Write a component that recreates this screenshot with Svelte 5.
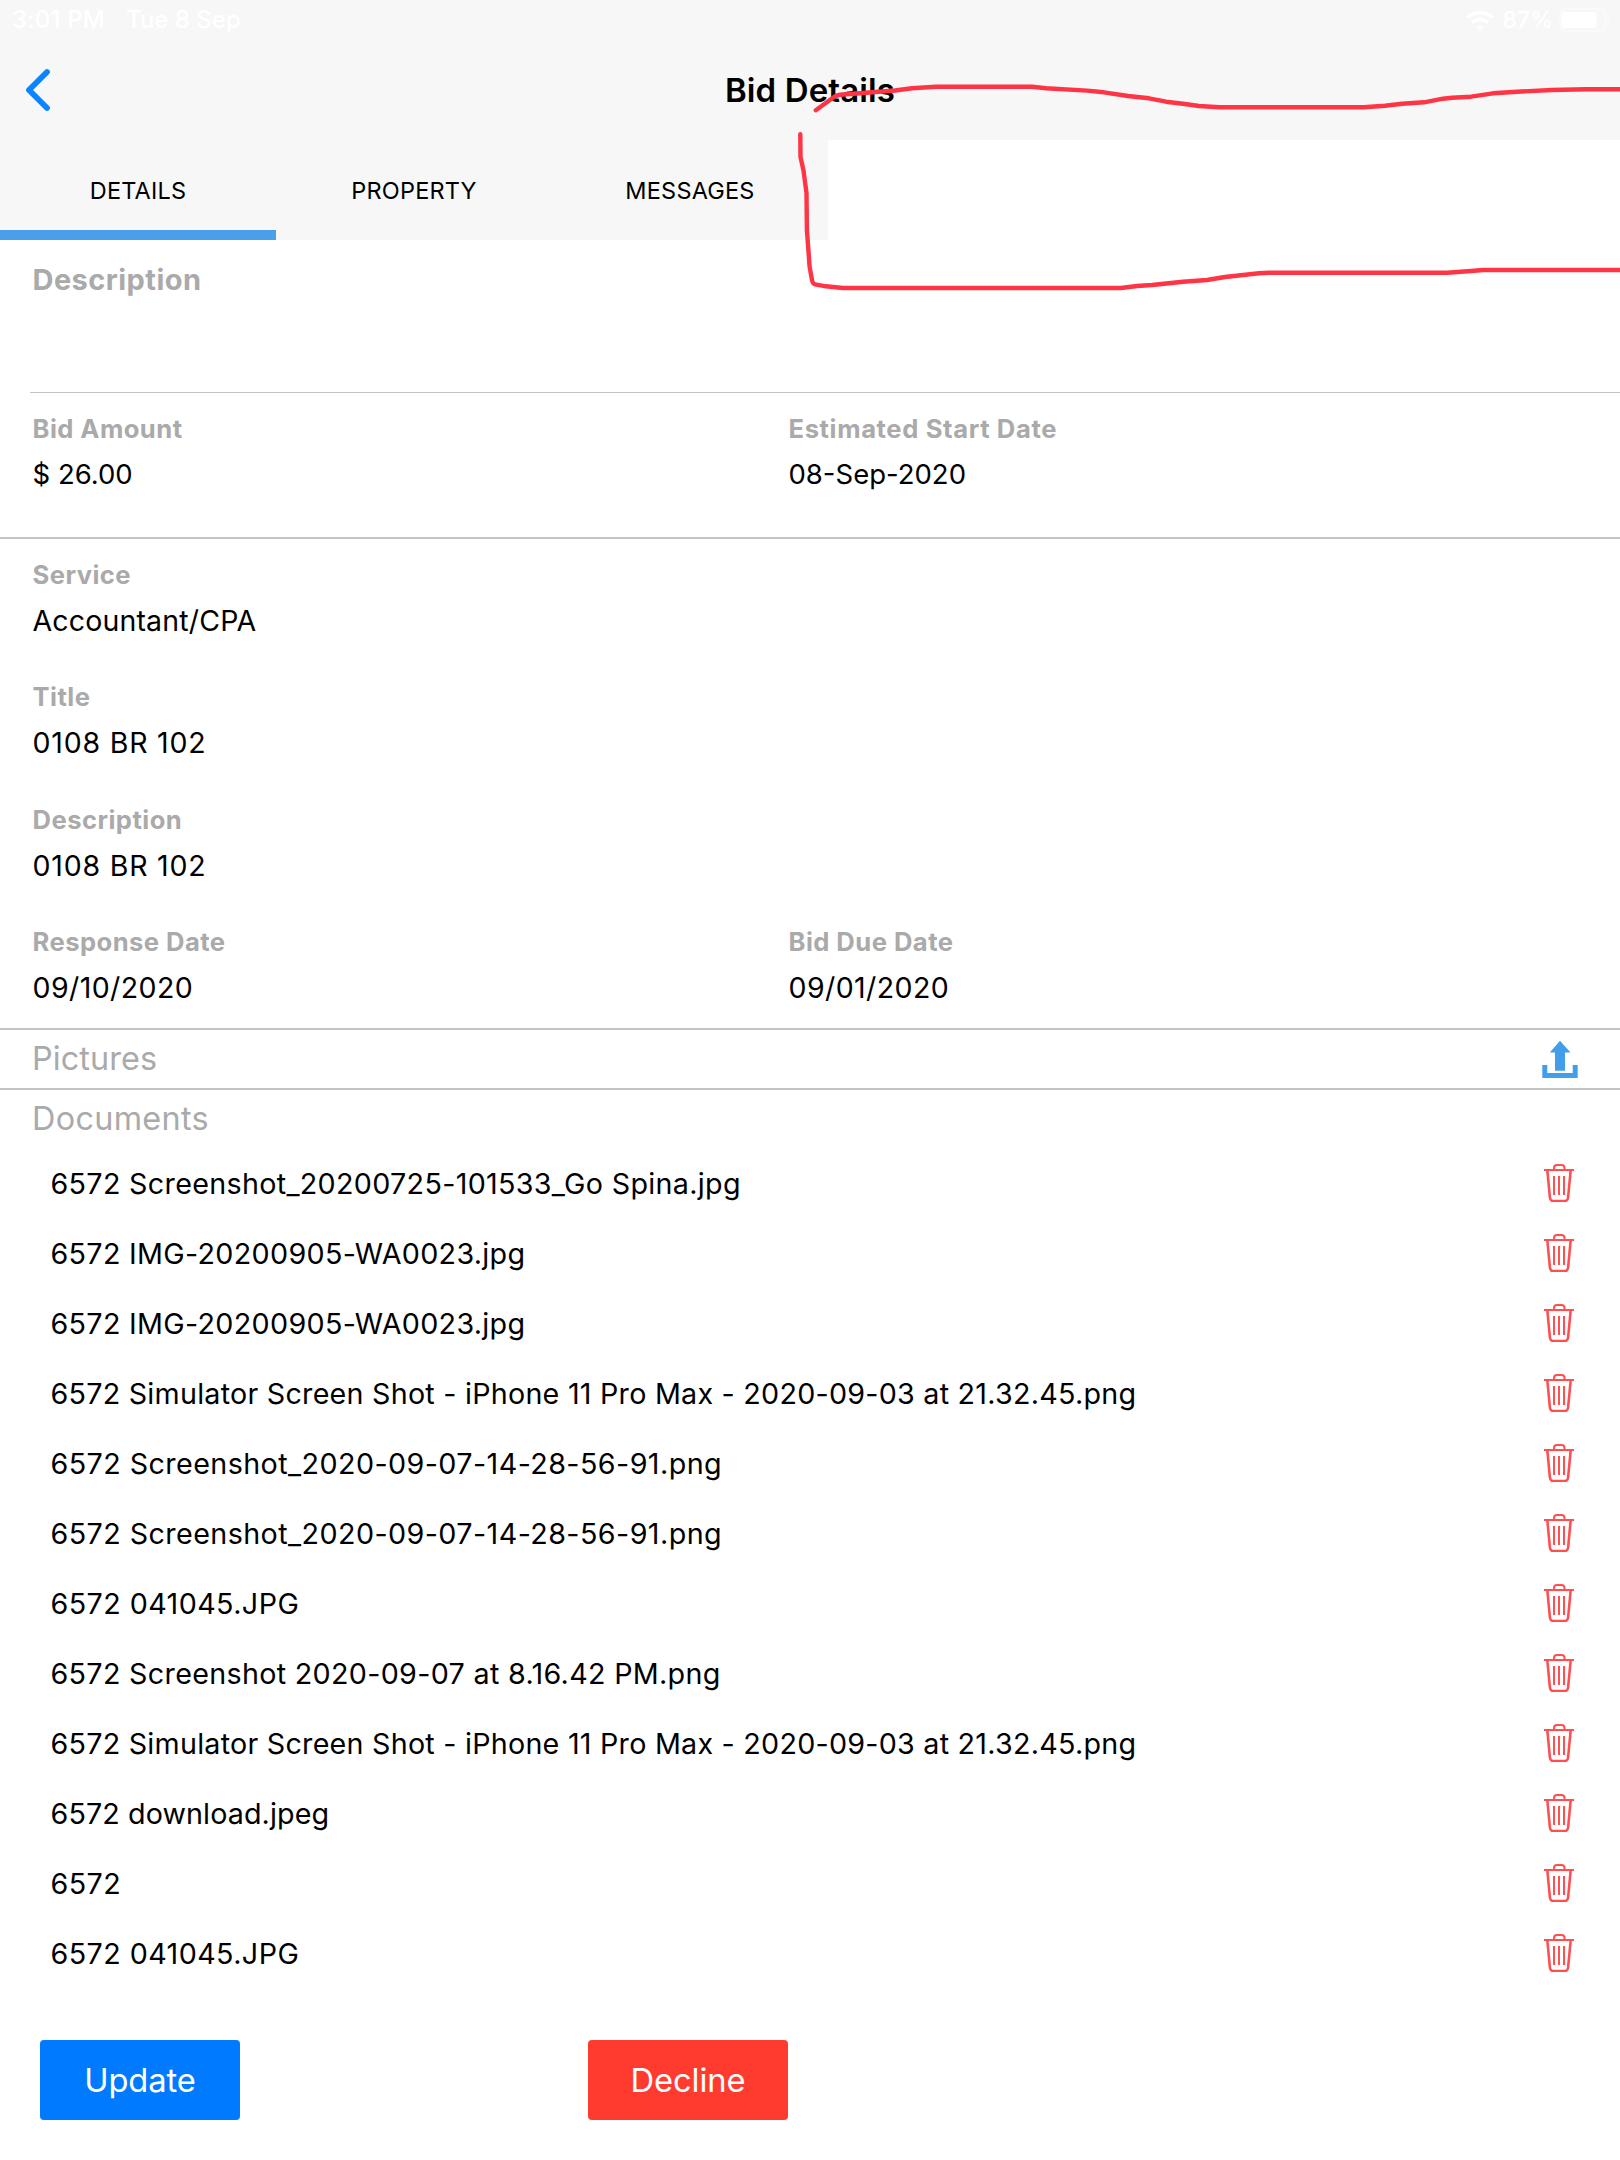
<script>
  const tabs = ['DETAILS', 'PROPERTY', 'MESSAGES'];
  let active = $state('DETAILS');

  const request = [
    [{ label: 'Service', value: 'Accountant/CPA', spacing: 'word' }],
    [{ label: 'Title', value: '0108 BR 102', spacing: 'loose' }],
    [{ label: 'Description', value: '0108 BR 102', spacing: 'loose' }],
    [
      { label: 'Response Date', value: '09/10/2020', spacing: 'date' },
      { label: 'Bid Due Date', value: '09/01/2020', spacing: 'date' },
    ],
  ];

  const documents = [
    { name: '6572 Screenshot_20200725-101533_Go Spina.jpg' },
    { name: '6572 IMG-20200905-WA0023.jpg' },
    { name: '6572 IMG-20200905-WA0023.jpg' },
    { name: '6572 Simulator Screen Shot - iPhone 11 Pro Max - 2020-09-03 at 21.32.45.png', spacing: 'snug' },
    { name: '6572 Screenshot_2020-09-07-14-28-56-91.png', spacing: 'date' },
    { name: '6572 Screenshot_2020-09-07-14-28-56-91.png', spacing: 'date' },
    { name: '6572 041045.JPG', spacing: 'date' },
    { name: '6572 Screenshot 2020-09-07 at 8.16.42 PM.png' },
    { name: '6572 Simulator Screen Shot - iPhone 11 Pro Max - 2020-09-03 at 21.32.45.png', spacing: 'snug' },
    { name: '6572 download.jpeg', spacing: 'word' },
    { name: '6572', spacing: 'date' },
    { name: '6572 041045.JPG', spacing: 'date' },
  ];
</script>

<div class="screen">
  <header>
    <div class="status">
      <span class="time">3:01 PM</span>
      <span class="day">Tue 8 Sep</span>
      <svg width="28" height="21" viewBox="0 0 28 21" fill="none" stroke="#fff" stroke-width="3.6">
        <path d="M1.5 7.5a18 18 0 0 1 25 0" />
        <path d="M6.2 12.6a11.3 11.3 0 0 1 15.6 0" />
        <path d="M14 20.7l-4-4a6 6 0 0 1 8 0z" fill="#fff" stroke="none" />
      </svg>
      <span class="percent">87%</span>
      <svg width="52" height="24" viewBox="0 0 52 24">
        <rect x="1" y="1" width="45.5" height="22" rx="6" fill="none" stroke="#fafafa" stroke-width="2" />
        <rect x="2.5" y="4" width="35" height="16" rx="2.5" fill="#fff" />
        <path d="M48.500 8.500q2.600 1 2.600 3.500t-2.600 3.500z" fill="#fafafa" />
      </svg>
    </div>
    <nav class="titlebar">
      <button class="back" aria-label="Back">
        <svg width="26" height="44" viewBox="0 0 26 44" fill="none" stroke="#0a84ff" stroke-width="5.8" stroke-linecap="round" stroke-linejoin="round">
          <path d="M22 4L4 22l18 18" />
        </svg>
      </button>
      <h1>Bid Details</h1>
    </nav>
  </header>

  <div class="tabs">
    {#each tabs as tab}
      <button class="tab" class:active={active === tab} onclick={() => (active = tab)}>{tab}</button>
    {/each}
  </div>

  <section class="summary"><h2>Description</h2></section>
  <div class="hairline"></div>

  <section class="amounts">
    <div class="field"><div class="label">Bid Amount</div><div class="value">$ 26.00</div></div>
    <div class="field"><div class="label wide">Estimated Start Date</div><div class="value">08-Sep-2020</div></div>
  </section>

  <section class="request">
    {#each request as row}
      <div class="row">
        {#each row as f}
          <div class="field"><div class="label">{f.label}</div><div class="value {f.spacing}">{f.value}</div></div>
        {/each}
      </div>
    {/each}
  </section>

  <section class="pictures">
    <h3>Pictures</h3>
    <button aria-label="Upload">
      <svg width="36" height="38" viewBox="0 0 36 38" fill="#439eea">
        <path d="M18 .7L28.5 12.6H23v18.1H13V12.6H7.8z" />
        <path d="M.3 25h5v8h25.4v-8h5v13H.3z" />
      </svg>
    </button>
  </section>

  <section class="documents">
    <h3>Documents</h3>
    <ul>
      {#each documents as doc}
        <li>
          <span class={doc.spacing ?? ''}>{doc.name}</span>
          <button aria-label="Delete">
            <svg width="30" height="38" viewBox="0 0 30 38" fill="none" stroke="#ff4f51" stroke-width="2">
              <path d="M10 5.5V4q0-3 3-3h4.500q3 0 3 3v1.500" />
              <path d="M0 6h30" />
              <path d="M3.300 6L5.900 33.500Q6.200 37 9 37h12q2.800 0 3.100-3.500L26.700 6" stroke-width="2.600" />
              <path d="M10 12v19M15 12v19M20 12v19" />
            </svg>
          </button>
        </li>
      {/each}
    </ul>
  </section>

  <footer>
    <button class="action update">Update</button>
    <button class="action decline">Decline</button>
  </footer>

  <!-- Freehand markup drawn over the empty tab area -->
  <svg class="ink" width="820" height="300" viewBox="800 0 820 300" fill="none" stroke="#ff3445" stroke-width="4.4" stroke-linecap="round" stroke-linejoin="round">
    <path d="M815.8 110.3L834 97Q836 95.3 840 94.800L895 90.500L912 88.300L936 86.700H1032L1046 88.300L1087 90.600L1104 92.300L1128 96L1149 98.300L1166 101.700L1183 103.700L1199 106L1219.500 107.300H1364L1385 105.700L1402 103.700L1424 102.300L1443 98.700L1452 97.700L1471 96.700L1493 93.300L1517 91.700L1552 90L1586 89.300H1625" />
    <path d="M800.3 134.3L800.5 157L803.4 170L806.5 193L806.9 230L809.600 266.700L812 280Q812.500 283.500 815 284.300L826 286.300L843 288H1121L1137 286L1152 285L1183 281.700L1207 280L1225 277L1259 273.300L1269 272.700H1447L1471 271L1483 270H1625" />
  </svg>
</div>

<style>
  :global(body) { background: #fff; }
  .screen {
    position: relative;
    width: 1620px;
    height: 2160px;
    overflow: hidden;
    background: #fff;
    color: #000;
    font-family: Inter, 'Liberation Sans', sans-serif;
  }
  button { border: 0; padding: 0; margin: 0; background: none; color: inherit; font: inherit; letter-spacing: inherit; }
  svg { display: block; }
  h1, h2, h3, ul { margin: 0; padding: 0; }

  header { height: 140px; background: #f7f7f7; }
  .status {
    display: flex;
    align-items: center;
    height: 40px;
    padding: 0 9px 0 12px;
    color: #fff;
    font-size: 24px;
    font-weight: 500;
    line-height: 38px;
    white-space: nowrap;
  }
  .time { width: 114px; letter-spacing: 0.2px; }
  .day { flex: 1; }
  .percent { margin: 0 6px 0 9px; font-size: 23px; }
  .titlebar { display: grid; grid-template-columns: 200px 1fr 200px; align-items: center; height: 100px; }
  .back { justify-self: start; margin-left: 25px; }
  h1 { text-align: center; font-size: 33px; font-weight: 600; line-height: 44px; letter-spacing: 0.12px; }

  .tabs { display: flex; width: 828px; height: 100px; background: #f7f7f7; box-shadow: inset 0 1px #f9f9f9; }
  .tab { flex: 1; padding-top: 2px; font-size: 23.5px; line-height: 98px; letter-spacing: 0.2px; }
  .tab.active { box-shadow: inset 0 -10px #4a9fea; }

  .summary { height: 152px; padding: 20px 32.5px 0; box-sizing: border-box; }
  h2 { color: #aaa; font-size: 29px; font-weight: 700; line-height: 40px; letter-spacing: 0.45px; }
  .hairline { height: 1px; margin-left: 30px; background: #c4c4c4; }

  .label { color: #aaa; font-size: 25.6px; font-weight: 700; line-height: 36px; letter-spacing: 0.45px; }
  .label.wide { letter-spacing: 0.62px; }
  .value { margin-top: 6px; font-size: 28.5px; line-height: 44px; }
  .loose { letter-spacing: 0.8px; }
  .date { letter-spacing: 0.42px; }
  .word { letter-spacing: 0.16px; }
  .amounts, .row { display: grid; grid-template-columns: 756px 1fr; }
  .amounts { height: 146px; padding: 18px 32.5px 0; box-sizing: border-box; border-bottom: 2px solid #c4c4c4; }
  .amounts .value { margin-top: 5px; font-size: 27.5px; }
  .request {
    display: flex;
    flex-direction: column;
    gap: 36.3px;
    height: 491px;
    padding: 18px 32.5px 0;
    box-sizing: border-box;
    border-bottom: 2px solid #c4c4c4;
  }

  h3 { color: #aaa; font-size: 32.4px; font-weight: 400; line-height: 58px; letter-spacing: 0.1px; }
  .pictures {
    display: flex;
    justify-content: space-between;
    height: 58px;
    padding: 0 42px 0 32px;
    border-bottom: 2px solid #c4c4c4;
  }
  .documents h3 { padding-left: 32px; letter-spacing: 0.3px; }
  ul { list-style: none; }
  li {
    display: flex;
    align-items: center;
    justify-content: space-between;
    height: 70px;
    padding: 0 46px 0 50.5px;
    font-size: 28.7px;
    letter-spacing: 0.31px;
  }
  li .snug { letter-spacing: 0.24px; }
  li .word { letter-spacing: 0.1px; }
  footer { display: flex; gap: 348px; padding: 52px 40px 0; }
  .action { width: 200px; height: 80px; border-radius: 4px; color: #fff; font-size: 32.7px; letter-spacing: -0.1px; }
  .update { background: #007aff; }
  .decline { background: #ff3b30; }

  .ink { position: absolute; top: 0; right: 0; pointer-events: none; overflow: visible; }
</style>
